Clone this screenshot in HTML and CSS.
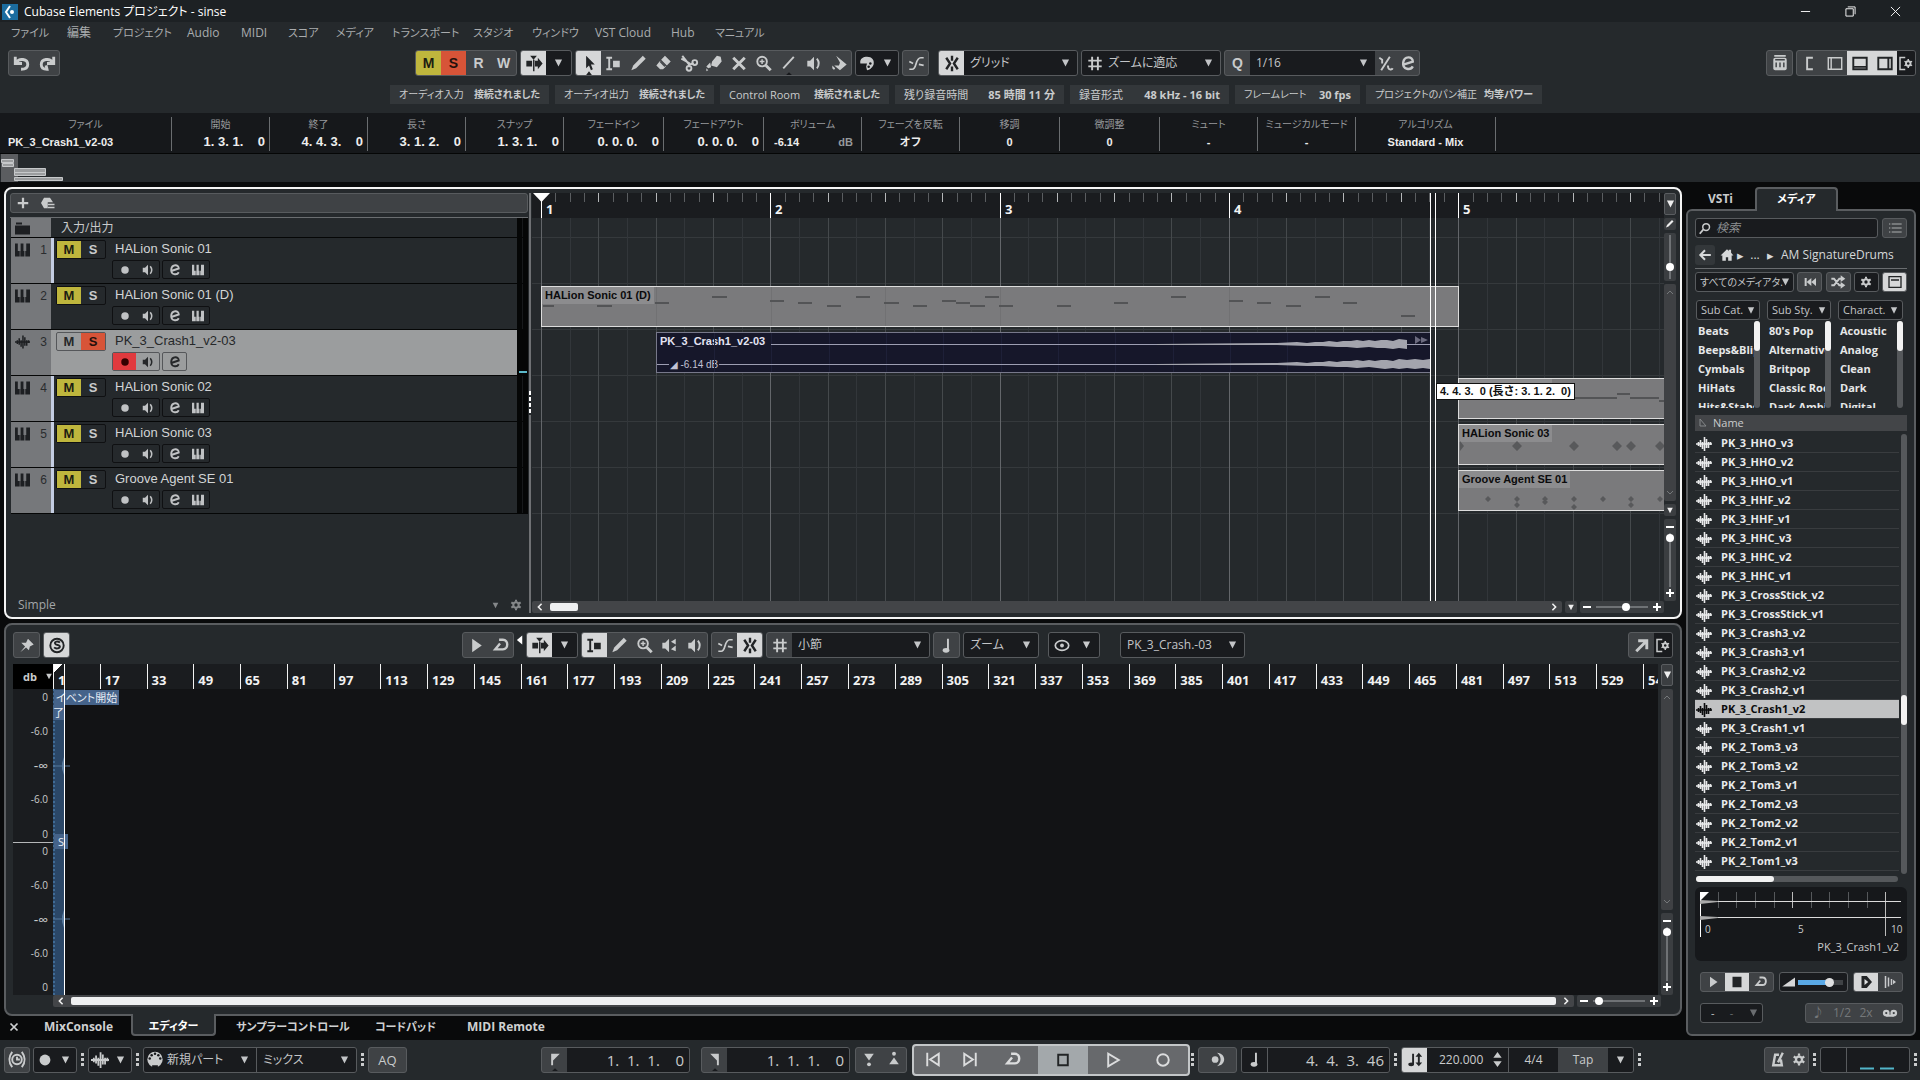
FILE: index.html
```html
<!DOCTYPE html>
<html lang="ja">
<head>
<meta charset="utf-8">
<title>Cubase Elements プロジェクト - sinse</title>
<link rel="stylesheet" href="styles.css">
</head>
<body>
<svg class="defs" aria-hidden="true">
  <symbol id="caret" viewBox="0 0 10 10"><path d="M1 1h8L5 9z"/></symbol>
  <symbol id="undo" viewBox="0 0 24 24"><path d="M5 5v7h7M6 11c3-5 12-4 12 2 0 4-3 5-7 5" fill="none" stroke="currentColor" stroke-width="3"/></symbol>
  <symbol id="redo" viewBox="0 0 24 24"><path d="M19 5v7h-7M18 11C15 6 6 7 6 13c0 4 3 5 6 5l-1-4" fill="none" stroke="currentColor" stroke-width="3"/></symbol>
  <symbol id="follow" viewBox="0 0 24 24"><path d="M4 9h6v6H4zM13 9h3V6l5 6-5 6v-3h-3zM11 8h1.500v12H11zM8 4h7l-3.500 4z"/></symbol>
  <symbol id="arrow" viewBox="0 0 24 24"><path d="M9 4v13l3-3 2 5 2-1-2-5h4zM9 24l3-4 3 4z"/></symbol>
  <symbol id="range" viewBox="0 0 24 24"><path d="M4 5h6v2H8v10h2v2H4v-2h2V7H4zM11 9h7v7h-7z"/></symbol>
  <symbol id="pencil" viewBox="0 0 24 24"><path d="M4 19l2-5L16 4l3 3L9 17z"/></symbol>
  <symbol id="eraser" viewBox="0 0 24 24"><path d="M13 4l6 6-4 4-6-6zM8 9l6 6-3 3H8l-4-4z"/><path d="M8 10l5 5" stroke="#44474a" stroke-width="1.500"/></symbol>
  <symbol id="scissors" viewBox="0 0 24 24"><g fill="none" stroke="currentColor" stroke-width="2"><path d="M5 4l7 9 5-1M12 12l0 4M4 7l9 5"/><circle cx="18" cy="11" r="2.500"/><circle cx="12" cy="17" r="2.500"/></g></symbol>
  <symbol id="glue" viewBox="0 0 24 24"><path d="M10 10l5-6 4 1 1 5-5 6-6-2zM8 11l-4 4 2 2 3-1zM4 17l2 2-2 1z"/></symbol>
  <symbol id="cross" viewBox="0 0 24 24"><path d="M6 6l12 12M18 6L6 18" stroke="currentColor" stroke-width="3"/></symbol>
  <symbol id="zoom" viewBox="0 0 24 24"><circle cx="10" cy="10" r="5" fill="none" stroke="currentColor" stroke-width="2"/><path d="M14 14l5 5" stroke="currentColor" stroke-width="3"/><path d="M7.500 10h5M10 7.500v5" stroke="currentColor" stroke-width="1.500"/></symbol>
  <symbol id="line" viewBox="0 0 24 24"><path d="M6 17L17 5" stroke="currentColor" stroke-width="2"/><path d="M9 24l3-3 3 3z" fill="#17191c"/></symbol>
  <symbol id="speaker" viewBox="0 0 24 24"><path d="M5 9h3l4-4v14l-4-4H5z"/><path d="M15 7q4 5 0 10" fill="none" stroke="currentColor" stroke-width="2"/></symbol>
  <symbol id="speaker2" viewBox="0 0 24 24"><path d="M4 9h3l4-4v14l-4-4H4zM13 8l5-3v6zM13 16l5-4v6z"/></symbol>
  <symbol id="bucket" viewBox="0 0 24 24"><path d="M9 4l11 9-7 6-6-5h5l1-3zM5 14l3 3q-1 3-3 0z"/></symbol>
  <symbol id="head" viewBox="0 0 24 24"><path d="M4 12C3 6 8 4 12 4c6 0 9 4 8 9-1 3-4 7-8 7l-1-4 1-4H8z"/><circle cx="16" cy="12" r="1.500" fill="#17191c"/><circle cx="14" cy="16" r="1.500" fill="#17191c"/></symbol>
  <symbol id="fade" viewBox="0 0 24 24"><path d="M5 18h3C13 18 11 6 17 6h3M5 10l4 2M15 13l5 1" fill="none" stroke="currentColor" stroke-width="1.800"/></symbol>
  <symbol id="snap" viewBox="0 0 24 24"><path d="M6 6l4 6-4 6M18 6l-4 6 4 6M12 4v5M12 15v5" fill="none" stroke="currentColor" stroke-width="2.500"/></symbol>
  <symbol id="hash" viewBox="0 0 24 24"><path d="M9 5v14M15 5v14M5 9h14M5 15h14" stroke="currentColor" stroke-width="2"/></symbol>
  <symbol id="percent" viewBox="0 0 24 24"><path d="M7 19L16 5M5 6l3 2v4M14 14c0 5 4 5 5 3" fill="none" stroke="currentColor" stroke-width="2"/></symbol>
  <symbol id="edit" viewBox="0 0 24 24"><path d="M8 13l9-3C17 4 8 4 7 11c-1 8 8 8 10 4" fill="none" stroke="currentColor" stroke-width="2.500"/></symbol>
  <symbol id="rack" viewBox="0 0 24 24"><rect x="5" y="6" width="14" height="13" rx="2"/><path d="M6 4h12" stroke="currentColor" stroke-width="2"/><path d="M8 11v5M12 11v5M16 11v5M7 8h10" stroke="#3f4245" stroke-width="1.500"/></symbol>
  <symbol id="zleft" viewBox="0 0 24 24"><path d="M15 6H9v12h6" fill="none" stroke="currentColor" stroke-width="2"/></symbol>
  <symbol id="zinfo" viewBox="0 0 24 24"><path d="M5 6h14v12H5zM8 6v12" fill="none" stroke="currentColor" stroke-width="1.500"/></symbol>
  <symbol id="zlow" viewBox="0 0 24 24"><path d="M5 6h14v12H5zM6 15.500h12" fill="none" stroke="currentColor" stroke-width="2"/></symbol>
  <symbol id="zright" viewBox="0 0 24 24"><path d="M5 6h14v12H5zM15.500 6v12" fill="none" stroke="currentColor" stroke-width="2"/></symbol>
  <symbol id="gear" viewBox="0 0 24 24"><circle cx="12" cy="12" r="4" fill="none" stroke="currentColor" stroke-width="3"/><path d="M12 4v3M12 17v3M5 8l3 2M16 14l3 2M5 16l3-2M16 10l3-2" stroke="currentColor" stroke-width="3"/></symbol>
  <symbol id="setup" viewBox="0 0 24 24"><path d="M11 4H4v16h7" fill="none" stroke="currentColor" stroke-width="2"/><circle cx="15" cy="12" r="3" fill="none" stroke="currentColor" stroke-width="2.500"/><path d="M15 6v3M15 15v3M10 9l3 2M17 13l3 2M10 15l3-2M17 11l3-2" stroke="currentColor" stroke-width="2"/></symbol>
  <symbol id="plus" viewBox="0 0 12 12"><path d="M6 2v8M2 6h8" stroke="currentColor" stroke-width="2"/></symbol>
  <symbol id="minus" viewBox="0 0 12 12"><path d="M2 6h8" stroke="currentColor" stroke-width="2"/></symbol>
  <symbol id="addtrack" viewBox="0 0 24 24"><path d="M12 5v14M5 12h14" stroke="currentColor" stroke-width="3"/></symbol>
  <symbol id="preset" viewBox="0 0 24 24"><path d="M4 12l4-7h8l4 6h-7v8H8z"/><path d="M13 14h9M13 18h9" stroke="currentColor" stroke-width="2"/></symbol>
  <symbol id="folder" viewBox="0 0 15 13"><path d="M1 0h6v2H1zM0 3h15v9H0z"/></symbol>
  <symbol id="keys" viewBox="0 0 16 14"><path d="M0 0h3v8h2v6H0zM6 0h3v8h1v6H5.700V8H6zM12 0h4v14h-5V8h1z"/></symbol>
  <symbol id="wave" viewBox="0 0 16 14"><path d="M0 7h16M2.500 5v4M4.500 3v7M6.500 5v7M8.500 0v14M10.500 2v9M12.500 5v6M14.500 5v3" fill="none" stroke="currentColor" stroke-width="1.600"/></symbol>
  <symbol id="dot" viewBox="0 0 24 24"><circle cx="12" cy="12" r="5"/></symbol>
  <symbol id="play" viewBox="0 0 24 24"><path d="M8 5l10 7-10 7z"/></symbol>
  <symbol id="loop" viewBox="0 0 24 24"><path d="M10 6h4c6 0 6 10 0 10H6l5-6" fill="none" stroke="currentColor" stroke-width="2.500"/></symbol>
  <symbol id="pin" viewBox="0 0 24 24"><path d="M13 5l6 6-2 1-2 1-1 4-3-3-6 5 5-6-4-4 5 0 1-2z"/></symbol>
  <symbol id="note" viewBox="0 0 24 24"><ellipse cx="11" cy="17" rx="3.500" ry="2.500"/><path d="M13 17V5" stroke="currentColor" stroke-width="2"/></symbol>
  <symbol id="eye" viewBox="0 0 24 24"><ellipse cx="12" cy="12" rx="7" ry="5" fill="none" stroke="currentColor" stroke-width="1.800"/><circle cx="12" cy="12" r="2"/></symbol>
  <symbol id="open" viewBox="0 0 24 24"><path d="M6 18L17 7M8 7h9v9" fill="none" stroke="currentColor" stroke-width="3"/></symbol>
  <symbol id="solo" viewBox="0 0 24 24"><circle cx="12" cy="12" r="7" fill="none" stroke="currentColor" stroke-width="2"/><path d="M15 9c-2-2-6-1-5 1s5 1 5 3-4 3-6 1" fill="none" stroke="currentColor" stroke-width="2"/></symbol>
  <symbol id="list" viewBox="0 0 24 24"><path d="M3 6h2M7 6h15M3 12h2M7 12h15M3 18h2M7 18h15" stroke="currentColor" stroke-width="3"/></symbol>
  <symbol id="back" viewBox="0 0 24 24"><path d="M22 12H5M12 4l-8 8 8 8" fill="none" stroke="currentColor" stroke-width="3.500"/></symbol>
  <symbol id="home" viewBox="0 0 24 24"><path d="M12 2L1 13h3v9h6v-6h4v6h6v-9h3L19 8V3h-4v2z"/></symbol>
  <symbol id="prev" viewBox="0 0 24 24"><path d="M4 6h3v12H4zM14 6v12l-7-6zM21 6v12l-7-6z"/></symbol>
  <symbol id="shuffle" viewBox="0 0 24 24"><path d="M2 7h4l8 10h4M2 17h4l8-10h4" fill="none" stroke="currentColor" stroke-width="3"/><path d="M16 2l7 5-7 5zM16 12l7 5-7 5z"/></symbol>
  <symbol id="window" viewBox="0 0 24 24"><path d="M3 4h18v16H3zM6 9h12" fill="none" stroke="currentColor" stroke-width="2"/></symbol>
  <symbol id="search" viewBox="0 0 16 16"><circle cx="9.500" cy="6" r="4.500" fill="none" stroke="currentColor" stroke-width="2"/><path d="M6 9l-5 6" stroke="currentColor" stroke-width="2.500"/></symbol>
  <symbol id="stopf" viewBox="0 0 24 24"><path d="M6 5h12v14H6z"/></symbol>
  <symbol id="ramp" viewBox="0 0 24 24"><path d="M3 18L20 6v12z"/></symbol>
  <symbol id="autop" viewBox="0 0 24 24"><path d="M6 4h7l7 8-7 8H6z"/><path d="M10 8l5 4-5 4z" fill="#dedfe0"/></symbol>
  <symbol id="sync" viewBox="0 0 24 24"><path d="M6 4v16M10 6v12M14 8v8" stroke="currentColor" stroke-width="2"/><path d="M16 9l4 3-4 3z"/></symbol>
  <symbol id="tape" viewBox="0 0 24 24"><g fill="none" stroke="currentColor" stroke-width="3"><circle cx="7" cy="12" r="3"/><circle cx="17" cy="12" r="3"/><path d="M7 15.500h10"/></g></symbol>
  <symbol id="clock" viewBox="0 0 24 24"><g fill="none" stroke="currentColor" stroke-width="2"><circle cx="12" cy="12" r="5"/><path d="M12 9v3h3M7 4q-6 8 0 16M17 4q6 8 0 16"/></g></symbol>
  <symbol id="din" viewBox="0 0 24 24"><circle cx="12" cy="12" r="8"/><g fill="#17191c"><circle cx="6.500" cy="11" r="1.300"/><circle cx="8.500" cy="7.500" r="1.300"/><circle cx="12" cy="6" r="1.300"/><circle cx="15.500" cy="7.500" r="1.300"/><circle cx="17.500" cy="11" r="1.300"/><path d="M9 21v-3h6v3z"/></g></symbol>
  <symbol id="flagl" viewBox="0 0 24 24"><path d="M8 6h9l-7 7v5H8z"/><path d="M8 25l4-4 4 4z" fill="#191b1e"/></symbol>
  <symbol id="flagr" viewBox="0 0 24 24"><path d="M16 6H7l7 7v5h2z"/><path d="M8 25l4-4 4 4z" fill="#191b1e"/></symbol>
  <symbol id="pin1" viewBox="0 0 24 24"><path d="M7 6h10l-5 7z"/><circle cx="12" cy="17" r="2"/></symbol>
  <symbol id="pin2" viewBox="0 0 24 24"><path d="M7 17h10l-5-7z"/><circle cx="12" cy="6" r="2"/></symbol>
  <symbol id="tostart" viewBox="0 0 24 24"><path d="M6 5v14M18 6v12l-9-6z" fill="none" stroke="currentColor" stroke-width="2"/></symbol>
  <symbol id="toend" viewBox="0 0 24 24"><path d="M18 5v14M6 6v12l9-6z" fill="none" stroke="currentColor" stroke-width="2"/></symbol>
  <symbol id="stop" viewBox="0 0 24 24"><path d="M7 7h10v11H7z" fill="none" stroke="currentColor" stroke-width="2"/></symbol>
  <symbol id="playo" viewBox="0 0 24 24"><path d="M7 6v13l11-6.500z" fill="none" stroke="currentColor" stroke-width="2"/></symbol>
  <symbol id="rec" viewBox="0 0 24 24"><circle cx="12" cy="12.500" r="6" fill="none" stroke="currentColor" stroke-width="2"/></symbol>
  <symbol id="perf" viewBox="0 0 24 24"><circle cx="9" cy="12" r="3.500"/><path d="M11 5c10 1 10 13 0 14 5-4 5-10 0-14z"/></symbol>
  <symbol id="tempo" viewBox="0 0 24 24"><ellipse cx="8" cy="17" rx="3" ry="2"/><path d="M10 17V6M16 8v9" stroke="currentColor" stroke-width="2"/><path d="M12.500 9l3.500-4 3.500 4zM12.500 15l3.500 4 3.500-4z"/></symbol>
  <symbol id="metro" viewBox="0 0 24 24"><path d="M13 7H9L7 18h9l-1-6M12 15l5-10" fill="none" stroke="currentColor" stroke-width="2.500"/></symbol>
  <symbol id="chev" viewBox="0 0 10 10"><path d="M2 7l3-3 3 3" fill="none" stroke="currentColor"/></symbol>
  <symbol id="cleft" viewBox="0 0 10 10"><path d="M7 1L3 5l4 4" fill="none" stroke="currentColor" stroke-width="2"/></symbol>
  <symbol id="cright" viewBox="0 0 10 10"><path d="M3 1l4 4-4 4" fill="none" stroke="currentColor" stroke-width="2"/></symbol>
</svg>

<header class="head">
  <div class="titlebar">
    <svg class="logo" viewBox="0 0 16 16"><path d="M0 0h16v16H0z" fill="#1b6c9f"/><path d="M8 2L4 8l4 6" fill="none" stroke="#fff" stroke-width="2"/><circle cx="10" cy="8" r="2" fill="#fff"/></svg>
    <h1>Cubase Elements プロジェクト - sinse</h1>
    <div class="winbtns">
      <button aria-label="最小化"><svg viewBox="0 0 12 12"><path d="M1 6h10"/></svg></button>
      <button aria-label="元に戻す"><svg viewBox="0 0 12 12"><path d="M1 3h8v8H1zM3 1h8v8"/></svg></button>
      <button aria-label="閉じる"><svg viewBox="0 0 12 12"><path d="M1 1l10 10M11 1L1 11"/></svg></button>
    </div>
  </div>
  <nav class="menu">
    <a href="#" class="kana">ファイル</a><a href="#">編集</a><a href="#" class="kana">プロジェクト</a><a href="#">Audio</a><a href="#">MIDI</a><a href="#" class="kana">スコア</a><a href="#" class="kana">メディア</a><a href="#" class="kana">トランスポート</a><a href="#" class="kana">スタジオ</a><a href="#" class="kana">ウィンドウ</a><a href="#">VST Cloud</a><a href="#">Hub</a><a href="#" class="kana">マニュアル</a>
  </nav>
  <div class="toolbar">
    <div class="cluster">
      <div class="grp"><button aria-label="取り消し"><svg><use href="#undo"/></svg></button><button aria-label="やり直し"><svg><use href="#redo"/></svg></button></div>
    </div>
    <div class="cluster">
      <div class="grp letters"><button class="yellow">M</button><button class="red">S</button><button>R</button><button>W</button></div>
      <div class="grp"><button class="on" aria-label="オートスクロール"><svg><use href="#follow"/></svg></button><button class="dark" aria-label="設定"><svg class="caret"><use href="#caret"/></svg></button></div>
      <div class="grp tools">
        <button class="on" aria-label="選択"><svg><use href="#arrow"/></svg></button><button aria-label="範囲"><svg><use href="#range"/></svg></button><button aria-label="鉛筆"><svg><use href="#pencil"/></svg></button><button aria-label="消しゴム"><svg><use href="#eraser"/></svg></button><button aria-label="はさみ"><svg><use href="#scissors"/></svg></button><button aria-label="のり"><svg><use href="#glue"/></svg></button><button aria-label="ミュート"><svg><use href="#cross"/></svg></button><button aria-label="ズーム"><svg><use href="#zoom"/></svg></button><button aria-label="ライン"><svg><use href="#line"/></svg></button><button aria-label="再生"><svg><use href="#speaker"/></svg></button><button aria-label="カラー"><svg><use href="#bucket"/></svg></button>
      </div>
      <div class="grp slim"><button class="dark" aria-label="カラーメニュー"><svg><use href="#head"/></svg></button><button class="dark" aria-label="カラー選択"><svg class="caret"><use href="#caret"/></svg></button></div>
      <div class="grp"><button aria-label="クロスフェード"><svg><use href="#fade"/></svg></button></div>
      <div class="grp apart"><button class="on" aria-label="スナップ"><svg><use href="#snap"/></svg></button><label class="sel w113"><select aria-label="スナップタイプ"><option>グリッド</option></select><svg class="caret"><use href="#caret"/></svg></label></div>
      <div class="grp"><button class="dark" aria-label="グリッド"><svg><use href="#hash"/></svg></button><label class="sel w113 tight"><select aria-label="グリッドタイプ"><option>ズームに適応</option></select><svg class="caret"><use href="#caret"/></svg></label></div>
      <div class="grp"><button class="q">Q</button><label class="sel w125"><select aria-label="クオンタイズ"><option>1/16</option></select><svg class="caret"><use href="#caret"/></svg></label><button class="b22" aria-label="適用"><svg><use href="#percent"/></svg></button><button class="b22" aria-label="パネル"><svg><use href="#edit"/></svg></button></div>
    </div>
    <div class="cluster zones">
      <div class="grp"><button aria-label="ラック"><svg><use href="#rack"/></svg></button></div>
      <div class="grp"><button aria-label="左ゾーン"><svg><use href="#zleft"/></svg></button><button aria-label="情報"><svg><use href="#zinfo"/></svg></button><button class="on" aria-label="下ゾーン"><svg><use href="#zlow"/></svg></button><button class="on" aria-label="右ゾーン"><svg><use href="#zright"/></svg></button><button class="dark b18" aria-label="ツールバー設定"><svg><use href="#setup"/></svg></button></div>
    </div>
  </div>
  <dl class="status">
    <div class="s160 kana"><dt>オーディオ入力</dt><dd>接続されました</dd></div>
    <div class="s160 kana"><dt>オーディオ出力</dt><dd>接続されました</dd></div>
    <div class="s168"><dt>Control Room</dt><dd class="kana">接続されました</dd></div>
    <div class="s168"><dt>残り録音時間</dt><dd>85 時間 11 分</dd></div>
    <div class="s160"><dt>録音形式</dt><dd>48 kHz - 16 bit</dd></div>
    <div class="s125"><dt class="kana">フレームレート</dt><dd>30 fps</dd></div>
    <div class="s176 kana"><dt>プロジェクトのパン補正</dt><dd>均等パワー</dd></div>
  </dl>
</header>

<dl class="info">
  <div class="left"><dt>ファイル</dt><dd>PK_3_Crash1_v2-03</dd></div>
  <div class="num"><dt>開始</dt><dd>1. 3. 1.    0</dd></div>
  <div class="num"><dt>終了</dt><dd>4. 4. 3.    0</dd></div>
  <div class="num"><dt>長さ</dt><dd>3. 1. 2.    0</dd></div>
  <div class="num"><dt>スナップ</dt><dd>1. 3. 1.    0</dd></div>
  <div class="num"><dt>フェードイン</dt><dd>0. 0. 0.    0</dd></div>
  <div class="num"><dt>フェードアウト</dt><dd>0. 0. 0.    0</dd></div>
  <div class="vol"><dt>ボリューム</dt><dd>-6.14 <span>dB</span></dd></div>
  <div><dt>フェーズを反転</dt><dd>オフ</dd></div>
  <div><dt>移調</dt><dd>0</dd></div>
  <div><dt>微調整</dt><dd>0</dd></div>
  <div><dt>ミュート</dt><dd>-</dd></div>
  <div><dt>ミュージカルモード</dt><dd>-</dd></div>
  <div><dt>アルゴリズム</dt><dd>Standard - Mix</dd></div>
</dl>
<div class="overview">
  <svg width="70" height="28"><path d="M1 0h17v28H1z" fill="#5b5d60"/><g fill="#9b9d9f" stroke="#c6c8ca"><path d="M1.500 5.500h12v3h-12zM2.500 9.500h11v3h-11zM14.500 14.500h31v4h-31zM14.500 18.500h31v3h-31zM14.500 23.500h48v3h-48z"/></g></svg>
</div>

<main class="main">
  <div class="leftcol">
    <section class="panel project">
      <div class="tracks">
        <div class="trackbar"><div class="grp low"><button aria-label="トラックを追加"><svg><use href="#addtrack"/></svg></button><button aria-label="プリセット"><svg><use href="#preset"/></svg></button></div></div>
        <div class="tracklist">
          <div class="track io"><div class="tid"><svg class="kind"><use href="#folder"/></svg></div><div class="tbody"><span>入力/出力</span></div><i class="meter"></i></div>
          <div class="track strip"><div class="tid"><svg class="kind"><use href="#keys"/></svg><b>1</b></div><div class="tbody"><div class="ms"><button class="yellow">M</button><button>S</button></div><h2>HALion Sonic 01</h2><div class="tbtns"><div><button aria-label="録音可能"><svg><use href="#dot"/></svg></button><button aria-label="モニター"><svg><use href="#speaker"/></svg></button></div><div><button aria-label="編集"><svg><use href="#edit"/></svg></button><button aria-label="音源"><svg class="kind"><use href="#keys"/></svg></button></div></div></div><i class="meter"></i></div>
          <div class="track"><div class="tid"><svg class="kind"><use href="#keys"/></svg><b>2</b></div><div class="tbody"><div class="ms"><button class="yellow">M</button><button>S</button></div><h2>HALion Sonic 01 (D)</h2><div class="tbtns"><div><button aria-label="録音可能"><svg><use href="#dot"/></svg></button><button aria-label="モニター"><svg><use href="#speaker"/></svg></button></div><div><button aria-label="編集"><svg><use href="#edit"/></svg></button><button aria-label="音源"><svg class="kind"><use href="#keys"/></svg></button></div></div></div><i class="meter"></i></div>
          <div class="track picked"><div class="tid"><svg class="kind"><use href="#wave"/></svg><b>3</b></div><div class="tbody"><div class="ms"><button>M</button><button class="red">S</button></div><h2>PK_3_Crash1_v2-03</h2><div class="tbtns"><div><button class="armed" aria-label="録音可能"><svg><use href="#dot"/></svg></button><button aria-label="モニター"><svg><use href="#speaker"/></svg></button></div><div><button aria-label="編集"><svg><use href="#edit"/></svg></button></div></div></div><i class="meter live"></i></div>
          <div class="track strip"><div class="tid"><svg class="kind"><use href="#keys"/></svg><b>4</b></div><div class="tbody"><div class="ms"><button class="yellow">M</button><button>S</button></div><h2>HALion Sonic 02</h2><div class="tbtns"><div><button aria-label="録音可能"><svg><use href="#dot"/></svg></button><button aria-label="モニター"><svg><use href="#speaker"/></svg></button></div><div><button aria-label="編集"><svg><use href="#edit"/></svg></button><button aria-label="音源"><svg class="kind"><use href="#keys"/></svg></button></div></div></div><i class="meter"></i></div>
          <div class="track strip"><div class="tid"><svg class="kind"><use href="#keys"/></svg><b>5</b></div><div class="tbody"><div class="ms"><button class="yellow">M</button><button>S</button></div><h2>HALion Sonic 03</h2><div class="tbtns"><div><button aria-label="録音可能"><svg><use href="#dot"/></svg></button><button aria-label="モニター"><svg><use href="#speaker"/></svg></button></div><div><button aria-label="編集"><svg><use href="#edit"/></svg></button><button aria-label="音源"><svg class="kind"><use href="#keys"/></svg></button></div></div></div><i class="meter"></i></div>
          <div class="track strip"><div class="tid"><svg class="kind"><use href="#keys"/></svg><b>6</b></div><div class="tbody"><div class="ms"><button class="yellow">M</button><button>S</button></div><h2>Groove Agent SE 01</h2><div class="tbtns"><div><button aria-label="録音可能"><svg><use href="#dot"/></svg></button><button aria-label="モニター"><svg><use href="#speaker"/></svg></button></div><div><button aria-label="編集"><svg><use href="#edit"/></svg></button><button aria-label="音源"><svg class="kind"><use href="#keys"/></svg></button></div></div></div><i class="meter"></i></div>
        </div>
        <div class="trackfoot"><span>Simple</span><svg class="caret"><use href="#caret"/></svg><svg class="gear"><use href="#gear"/></svg></div>
      </div>
      <div class="divider"><i></i></div>
      <div class="arrange">
        <div class="canvas">
          <svg class="grid" aria-hidden="true">
            <path d="M0 0h2400v25H0z" fill="#1a1c1f"/>
            <path class="g0" d="M0 44.500h2400M0 90.500h2400M0 136.500h2400M0 182.500h2400M0 228.500h2400M0 274.500h2400M0 320.500h2400"/>
            <path class="g1" d="M38.500 25v900M95.500 25v900M152.500 25v900M210.500 25v900M267.500 25v900M324.500 25v900M382.500 25v900M439.500 25v900M496.500 25v900M553.500 25v900M611.500 25v900M668.500 25v900M725.500 25v900M783.500 25v900M840.500 25v900M897.500 25v900M955.500 25v900M1012.500 25v900M1070.500 25v900M1127.500 25v900"/>
            <path class="g2" d="M66.500 25v900M124.500 25v900M181.500 25v900M296.500 25v900M353.500 25v900M410.500 25v900M525.500 25v900M582.500 25v900M639.500 25v900M754.500 25v900M811.500 25v900M869.500 25v900M984.500 25v900M1041.500 25v900M1098.500 25v900"/>
            <path class="g3" d="M9.500 25v900M238.500 25v900M468.500 25v900M697.500 25v900M926.500 25v900"/>
            <path class="t1" d="M23.500 0v9M38.500 0v9M52.500 0v9M81.500 0v9M95.500 0v9M109.500 0v9M138.500 0v9M152.500 0v9M167.500 0v9M195.500 0v9M210.500 0v9M224.500 0v9M253.500 0v9M267.500 0v9M281.500 0v9M310.500 0v9M324.500 0v9M339.500 0v9M367.500 0v9M382.500 0v9M396.500 0v9M425.500 0v9M439.500 0v9M453.500 0v9M482.500 0v9M496.500 0v9M510.500 0v9M539.500 0v9M553.500 0v9M568.500 0v9M597.500 0v9M611.500 0v9M625.500 0v9M654.500 0v9M668.500 0v9M683.500 0v9M711.500 0v9M725.500 0v9M740.500 0v9M768.500 0v9M783.500 0v9M797.500 0v9M826.500 0v9M840.500 0v9M854.500 0v9M883.500 0v9M897.500 0v9M912.500 0v9M941.500 0v9M955.500 0v9M969.500 0v9M998.500 0v9M1012.500 0v9M1026.500 0v9M1055.500 0v9M1070.500 0v9M1084.500 0v9M1112.500 0v9M1127.500 0v9"/>
            <path class="t2" d="M66.500 0v9M124.500 0v9M181.500 0v9M296.500 0v9M353.500 0v9M410.500 0v9M525.500 0v9M582.500 0v9M639.500 0v9M754.500 0v9M811.500 0v9M869.500 0v9M984.500 0v9M1041.500 0v9M1098.500 0v9"/>
            <path class="t3" d="M9.500 0v25M238.500 0v25M468.500 0v25M697.500 0v25M926.500 0v25"/>
            <path d="M1 0h17l-8.500 9z" fill="#fff"/>
          </svg>
          <b class="bar" style="left:14px">1</b><b class="bar" style="left:243px">2</b><b class="bar" style="left:473px">3</b><b class="bar" style="left:702px">4</b><b class="bar" style="left:931px">5</b>
          <div class="clip" style="left:9px;top:93px;width:918px"><span>HALion Sonic 01 (D)</span>
            <svg><path class="hair" d="M229.500 0v39M458.500 0v39M687.500 0v39M114.500 0v39M343.500 0v39"/><path class="notes" d="M1 19h11M55 19h15M113 16h14M170 10h15M228 14h14M256 16h14M285 19h14M314 10h14M342 16h15M371 19h14M400 14h14M414 16h14M428 19h15M443 10h14M457 19h14M515 19h14M572 16h14M629 10h15M687 14h14M715 16h14M744 19h15M773 10h15M801 16h14M859 29h14"/></svg></div>
          <div class="clip audio" style="left:124px;top:139px;width:775px"><span>PK_3_Crash1_v2-03</span><small>◢ -6.14 dB</small>
            <svg><path class="hair" d="M57.500 0v39M114.500 0v39M172.500 0v39M229.500 0v39M286.500 0v39M344.500 0v39M401.500 0v39M458.500 0v39M516.500 0v39M573.500 0v39M630.500 0v39"/><path class="zero" d="M114 11.500h660M0 31.500h12M62 31.500h712"/><path class="body" d="M500 11L620 10 640 9 650 10 658 9 666 9 672 8 680 9 686 8 694 8 700 7 706 8 712 7 718 8 724 7 730 7 736 8 742 6 750 7 750 16 742 15 736 16 728 15 720 15 712 14 700 15 690 14 680 14 665 13 650 13 620 12 500 12zM500 31L620 30 640 29 650 30 658 29 666 29 672 28 680 29 686 28 694 28 700 27 706 28 712 27 718 28 724 27 730 27 736 28 742 26 750 27 758 26 766 27 773 26 773 36 766 35 758 36 750 35 742 36 736 35 728 36 720 35 712 34 700 35 690 34 680 34 665 33 650 33 620 32 500 32z"/><path d="M758 3v8l6-4zM764 4v6l7-3z" fill="#6b6a7e"/></svg></div>
          <div class="clip" style="left:926px;top:185px;width:240px"><span>HALion Sonic 02</span><svg><path class="notes" d="M57 19h101M158 15h13M171 19h29M200 22h20"/></svg></div>
          <div class="clip" style="left:926px;top:231px;width:240px"><span>HALion Sonic 03</span><svg><path class="dia" d="M1 16l4 5-4 5zM53 21l5-5 5 5-5 5zM110 21l5-5 5 5-5 5zM153 21l5-5 5 5-5 5zM167 21l5-5 5 5-5 5zM196 21l5-5 5 5-5 5z"/></svg></div>
          <div class="clip" style="left:926px;top:277px;width:240px"><span>Groove Agent SE 01</span><svg><path class="dia" d="M26 28l3-3 3 3-3 3zM55 28l3-3 3 3-3 3zM55 34l3-3 3 3-3 3zM83 28l3-3 3 3-3 3zM83 31l3-3 3 3-3 3zM112 28l3-3 3 3-3 3zM112 36l3-3 3 3-3 3zM141 28l3-3 3 3-3 3zM169 28l3-3 3 3-3 3zM169 34l3-3 3 3-3 3zM198 28l3-3 3 3-3 3z"/></svg></div>
          <i class="cursor" style="left:898px"></i><i class="cursor" style="left:903px"></i>
          <div class="tip">4. 4. 3.  0 (長さ: 3. 1. 2.  0)</div>
        </div>
        <div class="vbars">
          <button class="chip tall" aria-label="ルーラー"><svg class="caret"><use href="#caret"/></svg></button>
          <button class="chip" aria-label="ペン"><svg class="mini"><use href="#pencil"/></svg></button>
          <div class="vz short"><input type="range" class="vert" aria-label="波形ズーム" value="22"></div>
          <div class="vscroll"><svg><use href="#chev"/></svg><svg class="flip"><use href="#chev"/></svg></div>
          <button class="chip" aria-label="縦メニュー"><svg class="caret sm"><use href="#caret"/></svg></button>
          <div class="vz"><button aria-label="縮小"><svg><use href="#minus"/></svg></button><input type="range" class="vert" aria-label="縦ズーム" value="97"><button aria-label="拡大"><svg><use href="#plus"/></svg></button></div>
        </div>
        <div class="hbars">
          <div class="hscroll"><svg><use href="#cleft"/></svg><div><i style="width:28px"></i></div><svg><use href="#cright"/></svg></div>
          <button class="chip" aria-label="横メニュー"><svg class="caret sm"><use href="#caret"/></svg></button>
          <div class="hz"><button aria-label="縮小"><svg><use href="#minus"/></svg></button><input type="range" aria-label="横ズーム" value="60"><button aria-label="拡大"><svg><use href="#plus"/></svg></button></div>
        </div>
      </div>
    </section>

    <section class="panel editor">
      <div class="edbar">
        <div class="cluster">
          <div class="grp"><button aria-label="固定"><svg><use href="#pin"/></svg></button></div>
          <div class="grp"><button class="on" aria-label="ソロ"><svg><use href="#solo"/></svg></button></div>
        </div>
        <div class="cluster">
          <div class="grp"><button aria-label="試聴"><svg><use href="#play"/></svg></button><button aria-label="試聴ループ"><svg><use href="#loop"/></svg></button></div>
          <svg class="pointer" viewBox="0 0 9 10"><path d="M1 5l6-5v10z"/></svg>
          <div class="grp"><button class="on" aria-label="オートスクロール"><svg><use href="#follow"/></svg></button><button class="dark" aria-label="設定"><svg class="caret"><use href="#caret"/></svg></button></div>
          <div class="grp"><button class="on" aria-label="範囲"><svg><use href="#range"/></svg></button><button aria-label="鉛筆"><svg><use href="#pencil"/></svg></button><button aria-label="ズーム"><svg><use href="#zoom"/></svg></button><button aria-label="スクラブ"><svg><use href="#speaker2"/></svg></button><button aria-label="再生"><svg><use href="#speaker"/></svg></button></div>
          <div class="grp"><button aria-label="ゼロクロス"><svg><use href="#fade"/></svg></button><button class="on" aria-label="スナップ"><svg><use href="#snap"/></svg></button></div>
          <div class="grp"><button aria-label="グリッド"><svg><use href="#hash"/></svg></button><label class="sel w137"><select aria-label="グリッドタイプ"><option>小節</option></select><svg class="caret"><use href="#caret"/></svg></label></div>
          <div class="grp"><button aria-label="音符"><svg><use href="#note"/></svg></button></div>
          <label class="grp sel w75"><select aria-label="表示"><option>ズーム</option></select><svg class="caret"><use href="#caret"/></svg></label>
          <div class="grp apart"><button class="dark" aria-label="表示項目"><svg><use href="#eye"/></svg></button><button class="dark" aria-label="表示メニュー"><svg class="caret"><use href="#caret"/></svg></button></div>
          <label class="grp sel w125 far"><select aria-label="イベント"><option>PK_3_Crash.-03</option></select><svg class="caret"><use href="#caret"/></svg></label>
        </div>
        <div class="grp"><button aria-label="ウィンドウで開く"><svg><use href="#open"/></svg></button><button class="dark b18" aria-label="設定"><svg><use href="#setup"/></svg></button></div>
      </div>
      <div class="sample">
        <button class="db">db <svg class="caret sm"><use href="#caret"/></svg></button>
        <div class="ruler"><b>1</b><b>17</b><b>33</b><b>49</b><b>65</b><b>81</b><b>97</b><b>113</b><b>129</b><b>145</b><b>161</b><b>177</b><b>193</b><b>209</b><b>225</b><b>241</b><b>257</b><b>273</b><b>289</b><b>305</b><b>321</b><b>337</b><b>353</b><b>369</b><b>385</b><b>401</b><b>417</b><b>433</b><b>449</b><b>465</b><b>481</b><b>497</b><b>513</b><b>529</b><b>545</b></div>
        <button class="chip tall" aria-label="ルーラー"><svg class="caret"><use href="#caret"/></svg></button>
        <div class="scale">
          <div><span>0</span><span>-6.0</span><span class="inf">-∞</span><span>-6.0</span><span>0</span></div>
          <div><span>0</span><span>-6.0</span><span class="inf">-∞</span><span>-6.0</span><span>0</span></div>
        </div>
        <div class="wavearea">
          <div class="event"></div>
          <svg class="blip top" viewBox="0 0 20 20"><path d="M0 9.500h17v1H0zM9 7l2-6 1-1v20l-1-1-2-6z"/></svg>
          <svg class="blip low" viewBox="0 0 20 20"><path d="M0 9.500h17v1H0zM9 7l2-6 1-1v20l-1-1-2-6z"/></svg>
          <span class="tag start">イベント開始</span><span class="tag end">了</span><span class="tag snap">S</span>
          <i class="edge"></i>
        </div>
        <div class="vbars">
          <div class="vscroll"><svg><use href="#chev"/></svg><svg class="flip"><use href="#chev"/></svg></div>
          <div class="vz"><button aria-label="縮小"><svg><use href="#minus"/></svg></button><input type="range" class="vert" aria-label="縦ズーム" value="97"><button aria-label="拡大"><svg><use href="#plus"/></svg></button></div>
        </div>
        <div class="hbars">
          <div class="hscroll"><svg><use href="#cleft"/></svg><div><i style="width:100%"></i></div><svg><use href="#cright"/></svg></div>
          <div class="hz"><button aria-label="縮小"><svg><use href="#minus"/></svg></button><input type="range" aria-label="横ズーム" value="5"><button aria-label="拡大"><svg><use href="#plus"/></svg></button></div>
        </div>
      </div>
    </section>
    <nav class="lowtabs">
      <button class="x" aria-label="閉じる"><svg><use href="#cross"/></svg></button>
      <a href="#" class="n1">MixConsole</a><a href="#" class="cur kana">エディター</a><a href="#" class="n2 kana">サンプラーコントロール</a><a href="#" class="n3 kana">コードパッド</a><a href="#">MIDI Remote</a>
    </nav>
  </div>

  <aside class="side">
    <nav class="sidetabs"><a href="#">VSTi</a><a href="#" class="cur">メディア</a></nav>
    <div class="media">
      <div class="row searchrow"><label class="search"><svg><use href="#search"/></svg><input type="text" placeholder="検索" aria-label="検索"></label><button class="sb dim" aria-label="リスト"><svg><use href="#list"/></svg></button></div>
      <div class="row crumbs"><button aria-label="戻る"><svg><use href="#back"/></svg></button><a href="#" aria-label="ホーム"><svg><use href="#home"/></svg></a><i>▸</i><a href="#" class="dots3">...</a><i>▸</i><a href="#" class="here">AM SignatureDrums</a></div>
      <div class="row filters"><label class="sel w100"><select aria-label="メディアタイプ"><option>すべてのメディアタ.</option></select><svg class="caret"><use href="#caret"/></svg></label><button class="sb" aria-label="リセット"><svg><use href="#prev"/></svg></button><button class="sb" aria-label="シャッフル"><svg><use href="#shuffle"/></svg></button><button class="sb dark" aria-label="設定"><svg><use href="#gear"/></svg></button><button class="sb on" aria-label="プレビュー"><svg><use href="#window"/></svg></button></div>
      <div class="cats">
        <div><label class="sel"><select aria-label="Sub Category"><option>Sub Cat.</option></select><svg class="caret"><use href="#caret"/></svg></label><div class="cat"><ul><li>Beats</li><li>Beeps&amp;Blips</li><li>Cymbals</li><li>HiHats</li><li>Hits&amp;Stabs</li></ul><div class="sc"><i></i></div></div></div>
        <div><label class="sel"><select aria-label="Sub Style"><option>Sub Sty.</option></select><svg class="caret"><use href="#caret"/></svg></label><div class="cat"><ul><li>80's Pop</li><li>Alternative</li><li>Britpop</li><li>Classic Rock</li><li>Dark Ambient</li></ul><div class="sc"><i></i></div></div></div>
        <div><label class="sel"><select aria-label="Character"><option>Charact.</option></select><svg class="caret"><use href="#caret"/></svg></label><div class="cat"><ul><li>Acoustic</li><li>Analog</li><li>Clean</li><li>Dark</li><li>Digital</li></ul><div class="sc"><i></i></div></div></div>
      </div>
      <div class="results">
        <div class="rwrap">
        <table>
          <thead><tr><th><svg viewBox="0 0 8 8"><path d="M1 0v7h6z" fill="none" stroke="currentColor"/></svg>Name</th></tr></thead>
          <tbody>
            <tr><td><svg><use href="#wave"/></svg>PK_3_HHO_v3</td></tr>
            <tr><td><svg><use href="#wave"/></svg>PK_3_HHO_v2</td></tr>
            <tr><td><svg><use href="#wave"/></svg>PK_3_HHO_v1</td></tr>
            <tr><td><svg><use href="#wave"/></svg>PK_3_HHF_v2</td></tr>
            <tr><td><svg><use href="#wave"/></svg>PK_3_HHF_v1</td></tr>
            <tr><td><svg><use href="#wave"/></svg>PK_3_HHC_v3</td></tr>
            <tr><td><svg><use href="#wave"/></svg>PK_3_HHC_v2</td></tr>
            <tr><td><svg><use href="#wave"/></svg>PK_3_HHC_v1</td></tr>
            <tr><td><svg><use href="#wave"/></svg>PK_3_CrossStick_v2</td></tr>
            <tr><td><svg><use href="#wave"/></svg>PK_3_CrossStick_v1</td></tr>
            <tr><td><svg><use href="#wave"/></svg>PK_3_Crash3_v2</td></tr>
            <tr><td><svg><use href="#wave"/></svg>PK_3_Crash3_v1</td></tr>
            <tr><td><svg><use href="#wave"/></svg>PK_3_Crash2_v2</td></tr>
            <tr><td><svg><use href="#wave"/></svg>PK_3_Crash2_v1</td></tr>
            <tr class="picked"><td><svg><use href="#wave"/></svg>PK_3_Crash1_v2</td></tr>
            <tr><td><svg><use href="#wave"/></svg>PK_3_Crash1_v1</td></tr>
            <tr><td><svg><use href="#wave"/></svg>PK_2_Tom3_v3</td></tr>
            <tr><td><svg><use href="#wave"/></svg>PK_2_Tom3_v2</td></tr>
            <tr><td><svg><use href="#wave"/></svg>PK_2_Tom3_v1</td></tr>
            <tr><td><svg><use href="#wave"/></svg>PK_2_Tom2_v3</td></tr>
            <tr><td><svg><use href="#wave"/></svg>PK_2_Tom2_v2</td></tr>
            <tr><td><svg><use href="#wave"/></svg>PK_2_Tom2_v1</td></tr>
            <tr><td><svg><use href="#wave"/></svg>PK_2_Tom1_v3</td></tr>
            <tr><td><svg><use href="#wave"/></svg></td></tr>
          </tbody>
        </table>
        </div>
        <div class="rside"><b></b><div class="sc"><i></i></div></div>
        <div class="rh"><i></i></div>
      </div>
      <div class="preview">
        <svg viewBox="0 0 203 30"><path d="M18.500 0v16M36.500 0v16M55.500 0v16M74.500 0v16M111.500 0v16M129.500 0v16M148.500 0v16M167.500 0v16" stroke="#55585b"/><path d="M92.500 0v16M185.500 0v44" stroke="#bbb"/><path d="M.500 0v45" stroke="#fff"/><path d="M0 9.500h201M0 25.500h201" stroke="#dcdcdc"/><path d="M0 8l18 1v1L0 12zM0 24l18 1v1L0 28z" fill="#aaa"/><path d="M0 0h9L0 9z" fill="#fff"/></svg>
        <div class="secs"><span>0</span><span>5</span><span>10</span></div>
        <p>PK_3_Crash1_v2</p>
      </div>
      <div class="row pv">
        <div class="grp low"><button aria-label="再生"><svg><use href="#play"/></svg></button><button class="on" aria-label="停止"><svg><use href="#stopf"/></svg></button><button aria-label="ループ"><svg><use href="#loop"/></svg></button></div>
        <div class="grp low volume"><svg><use href="#ramp"/></svg><input type="range" aria-label="音量" value="76"></div>
        <div class="grp low"><button class="on" aria-label="自動再生"><svg><use href="#autop"/></svg></button><button aria-label="同期"><svg><use href="#sync"/></svg></button></div>
      </div>
      <div class="row pv last">
        <label class="sel w63 off"><select aria-label="キー"><option>-</option></select><em>-</em><svg class="caret"><use href="#caret"/></svg></label>
        <div class="grp low faint"><button>♪</button><button>1/2</button><button>2x</button><button class="lit" aria-label="テープ"><svg><use href="#tape"/></svg></button></div>
      </div>
    </div>
  </aside>
</main>

<footer class="transport">
  <div class="cluster">
    <div class="grp"><button class="b23" aria-label="オーディオ性能"><svg><use href="#clock"/></svg></button></div>
    <div class="grp slim"><button class="dark" aria-label="録音モード"><svg class="big"><use href="#dot"/></svg></button><button class="dark" aria-label="録音メニュー"><svg class="caret"><use href="#caret"/></svg></button></div><i class="grip"></i>
    <div class="grp slim"><button class="dark" aria-label="オーディオ録音"><svg class="wv"><use href="#wave"/></svg></button><button class="dark" aria-label="オーディオメニュー"><svg class="caret"><use href="#caret"/></svg></button></div><i class="grip"></i>
    <div class="grp"><button class="dark b22" aria-label="MIDI"><svg><use href="#din"/></svg></button><label class="sel w90 tight"><select aria-label="MIDI 録音モード"><option>新規パート</option></select><svg class="caret"><use href="#caret"/></svg></label><label class="sel w100 split"><select aria-label="サイクル録音モード"><option>ミックス</option></select><svg class="caret"><use href="#caret"/></svg></label></div><i class="grip"></i>
    <div class="grp"><button class="aq">AQ</button></div>
  </div>
  <div class="cluster mid">
    <div class="grp"><button aria-label="左ロケーター"><svg><use href="#flagl"/></svg></button><output class="w122">1.  1.  1.    0</output></div>
    <div class="grp loc2"><button aria-label="右ロケーター"><svg><use href="#flagr"/></svg></button><output class="w122">1.  1.  1.    0</output></div>
    <div class="grp"><button aria-label="パンチイン"><svg><use href="#pin1"/></svg></button><button aria-label="パンチアウト"><svg><use href="#pin2"/></svg></button></div>
    <div class="deck"><button class="b37" aria-label="先頭へ"><svg><use href="#tostart"/></svg></button><button class="b37" aria-label="末尾へ"><svg><use href="#toend"/></svg></button><button aria-label="サイクル"><svg><use href="#loop"/></svg></button><button class="cur" aria-label="停止"><svg><use href="#stop"/></svg></button><button aria-label="再生"><svg><use href="#playo"/></svg></button><button aria-label="録音"><svg><use href="#rec"/></svg></button></div><i class="grip"></i>
    <div class="grp"><button class="b37" aria-label="プリロール"><svg><use href="#perf"/></svg></button></div>
    <div class="grp"><button class="dark" aria-label="時間表示"><svg><use href="#note"/></svg></button><output class="w122 split">4.  4.  3.  46</output></div><i class="grip"></i>
    <div class="grp"><button class="on" aria-label="テンポトラック"><svg><use href="#tempo"/></svg></button><output class="w80 bpm">220.000<svg viewBox="0 0 10 18"><path d="M0 7l5-7 5 7zM0 11h10l-5 7z"/></svg></output><output class="w50 split sig">4/4</output><button class="b50">Tap</button><button class="dark" aria-label="テンポメニュー"><svg class="caret"><use href="#caret"/></svg></button></div><i class="grip"></i>
  </div>
  <div class="cluster">
    <div class="grp"><button aria-label="メトロノーム"><svg><use href="#metro"/></svg></button><button class="b18" aria-label="メトロノーム設定"><svg><use href="#gear"/></svg></button></div><i class="grip"></i>
    <div class="grp levels"><i></i><svg viewBox="0 0 60 23"><path d="M13 20h14M33 20h14" stroke="#52b6c9" stroke-width="2"/></svg></div><i class="grip"></i>
  </div>
</footer>
</body>
</html>
```
FILE: styles.css
```css
* { box-sizing: border-box; }
body {
  margin: 0; height: 100vh; min-height: 720px; display: flex; flex-direction: column;
  background: #090a0b; color: #c9cbcc;
  font: 12px/16px "Open Sans", "Noto Sans CJK JP", sans-serif;
  font-feature-settings: "palt";
}
h1, h2, dl, dd, ul, p { margin: 0; padding: 0; font-weight: normal; font-size: inherit; }
ul { list-style: none; }
a { color: inherit; text-decoration: none; }
i, em { font-style: normal; }
svg { fill: currentColor; display: block; flex: none; }
.defs { position: absolute; width: 0; height: 0; }
button, select, input { font: inherit; color: inherit; margin: 0; padding: 0; border: 0; background: none; border-radius: 0; font-feature-settings: inherit; }
button { display: flex; align-items: center; justify-content: center; flex: none; }
button svg { width: 24px; height: 23px; }
svg.caret, button svg.caret { width: 9px; height: 10px; }
svg.caret.sm, button svg.caret.sm { width: 8px; height: 7px; }

/* header */
.head { background: #25292c; height: 113px; flex: none; }
.titlebar { display: flex; align-items: center; height: 22px; background: #1d2124; padding: 1px 0 0 2px; color: #fff; }
.logo { width: 16px; height: 16px; }
.titlebar h1 { margin-left: 6px; font-size: 12px; flex: 1; }
.winbtns { display: flex; padding-right: 2px; }
.winbtns button { width: 45px; height: 21px; }
.winbtns svg { width: 11px; height: 11px; fill: none; stroke: #fff; }
.menu { display: grid; grid-template-columns: 56px 46px 74px 54px 47px 48px 56px 81px 59px 63px 76px 44px auto; justify-content: start; padding: 3px 11px; font-size: 12px; color: #a9acae; white-space: nowrap; }
.menu .kana { font-size: 11px; }
.toolbar { display: grid; grid-template-columns: 407px 1fr auto; padding: 6px 4px 0 8px; }
.cluster { display: flex; align-items: center; gap: 3px; }
.grp { display: flex; height: 26px; border: 1px solid #585b5e; border-radius: 3px; background: #3f4245; overflow: hidden; flex: none; }
.grp.low { height: 20px; }
.grp button { width: 25px; height: 100%; }
.grp.slim button { width: 21px; }
.grp.slim button svg { width: 20px; }
.grp.slim button svg.big { width: 26px; height: 26px; }
.grp.slim button svg.caret { width: 9px; }
.grp button.b18 { width: 18px; }
.grp button.b18 svg { width: 18px; }
.grp button.b22 { width: 22px; }
.grp button.b23 { width: 24px; }
.grp button.b37 { width: 37px; }
.grp button.b50 { width: 50px; }
.letters button, .q { font: bold 14px/20px "Liberation Sans", sans-serif; }
.yellow { background: #bfb63d; color: #1c1d12; }
.red { background: #d75438; color: #25100c; }
button.on { background: #d6d7d8; color: #222426; }
button.dark { background: #191b1e; }
.apart { margin-left: 6px; }
.far { margin-left: 17px; }
.sel { display: grid; align-items: center; background: #191b1e; color: #c3c5c7; font-size: 12px; }
.sel > * { grid-area: 1 / 1; }
.sel select { appearance: none; width: 100%; height: 100%; padding-left: 6px; outline: 0; }
.sel.tight select { padding-left: 1px; }
.sel svg.caret { justify-self: end; margin-right: 7px; pointer-events: none; }
.w63 { width: 63px; } .w75 { width: 76px; } .w90 { width: 90px; } .w100 { width: 100px; } .w113 { width: 113px; } .w125 { width: 125px; } .w137 { width: 137px; }
.status { display: flex; justify-content: center; gap: 6px; padding: 9px 0 0 12px; font-size: 11px; }
.status div { display: flex; justify-content: space-between; padding: 1px 9px; height: 19px; line-height: 17px; background: #33373a; white-space: nowrap; }
.status .kana { font-size: 10px; }
.status dd { font-weight: bold; }
.s160 { width: 159px; } .s168 { width: 169px; } .s125 { width: 125px; } .s176 { width: 176px; }

/* info line */
.info { flex: none; display: grid; grid-template-columns: 172px repeat(4, 98px) 100px 100px 98px 98px 100px 100px 98px 98px 140px; height: 41px; padding: 4px 0 2px; background: #16181b; border-bottom: 1px solid #050606; }
.info div { border-right: 1px solid #6a6d70; text-align: center; white-space: pre; overflow: hidden; }
.info dt { font-size: 10px; line-height: 15px; color: #96999c; }
.info dd { font: bold 11px/20px "Liberation Sans", "Noto Sans CJK JP", sans-serif; color: #eee; }
.info .left dd { text-align: left; padding-left: 8px; }
.info .num dd { text-align: right; padding-right: 4px; font-size: 13px; }
.info .vol dd { display: flex; justify-content: space-between; padding: 0 8px 0 10px; }
.info .vol span { color: #96999c; }
.overview { height: 28px; background: #25292c; flex: none; }

/* main frame */
.main { flex: 1; display: grid; grid-template: minmax(0, 1fr) / 1fr 230px; column-gap: 4px; padding: 5px 4px 0; min-height: 0; }
.leftcol { display: flex; flex-direction: column; gap: 4px; min-width: 0; min-height: 0; }
.panel { background: #25292c; border: 2px solid #5a5d60; border-radius: 8px; min-height: 0; overflow: hidden; }
.project { border-color: #f4f4f4; display: grid; grid-template: minmax(0, 1fr) / 518px 6px 1fr; padding: 4px; flex: 420 1 0; }
.editor { flex: 375 1 0; padding: 7px; display: flex; flex-direction: column; gap: 6px; }

/* track list */
.tracks { display: flex; flex-direction: column; min-height: 0; }
.trackbar { height: 25px; border-bottom: 1px solid #6a6d70; }
.trackbar .grp button { width: 24px; }
.trackbar .grp button svg { width: 18px; height: 18px; }
.tracklist { padding-left: 1px; }
.track { display: grid; grid-template-columns: 40px 3px 1fr 11px; height: 46px; border-bottom: 1px solid #050606; }
.track.io { height: 20px; }
.tid { display: flex; justify-content: space-between; padding: 5px 4px 0 4px; background: #76787b; color: #1d1f22; }
.tid b { font: 12px/15px "Liberation Sans", sans-serif; color: #2a2c2e; }
.track.io .tid { padding-top: 4px; }
svg.kind, button svg.kind { width: 15px; height: 14px; }
.strip { background: linear-gradient(90deg, transparent 40px, #c4cde2 40px, #c4cde2 43px, transparent 43px); }
.tbody { grid-column: 3; display: grid; grid-template-columns: 50px 1fr; column-gap: 9px; align-content: start; padding: 2px 0 0 2px; }
.tbody > span { grid-column: span 2; padding-left: 5px; line-height: 16px; }
.tbody h2 { font: 13px/18px "Liberation Sans", sans-serif; color: #d3d5d6; }
.meter { background: linear-gradient(90deg, #050606 5px, #17191b 5px, #17191b 6px, #050606 6px); }
.meter.live { background: linear-gradient(#5bb8c9, #5bb8c9) 2px 41px / 8px 2px no-repeat #050606; }
.ms { display: flex; border: 1px solid #0f1012; border-radius: 2px; height: 19px; }
.ms button { width: 24px; font: bold 13px/16px "Liberation Sans", sans-serif; }
.tbtns { grid-column: 2; display: flex; gap: 2px; margin-left: -3px; margin-top: 1px; }
.tbtns div { display: flex; border: 1px solid #0f1012; border-radius: 2px; height: 19px; }
.tbtns button { width: 23px; color: #c0c2c4; }
.tbtns button svg { width: 18px; height: 18px; }
.tbtns button svg.kind { width: 12px; height: 12px; }
.picked .tbody, .picked { background: #9b9d9e; }
.picked .tbody, .picked .tbody h2, .picked .tbtns button { color: #26282a; }
.picked .ms, .picked .tbtns div { border-color: #55575a; }
.picked .tbtns button.armed { background: #e03a3e; color: #300; }
.trackfoot { margin-top: auto; display: flex; align-items: center; padding: 0 4px 0 8px; color: #a3a6a8; height: 16px; }
.trackfoot span { flex: 1; }
.trackfoot svg.caret { width: 11px; height: 7px; margin-right: 7px; color: #85888a; }
.trackfoot .gear { width: 16px; height: 16px; color: #85888a; }
.divider { border-left: 2px solid #6f7174; margin-left: 1px; display: flex; align-items: center; }
.divider i { width: 2px; height: 24px; margin-left: -2px; background: repeating-linear-gradient(#fff 0, #fff 4px, #25292c 4px, #25292c 6px); }

/* arrangement */
.arrange { display: grid; grid-template: minmax(0, 1fr) 12px / 1fr 12px; margin-left: -2px; min-width: 0; min-height: 0; }
.canvas { position: relative; overflow: hidden; }
.grid { position: absolute; width: 100%; height: 100%; fill: none; }
.g0 { stroke: #35393c; } .g1 { stroke: #32363a; } .g2 { stroke: #45494c; } .g3 { stroke: #63666a; }
.t1 { stroke: #5a5d60; } .t2 { stroke: #b5b7b9; } .t3 { stroke: #fff; }
.bar { position: absolute; top: 8px; font-size: 13px; line-height: 17px; color: #f2f2f2; }
.clip { position: absolute; height: 41px; border: 1px solid #dcdcdc; background: #7a7a7c; color: #0b0b0c; font: bold 11px/17px "Liberation Sans", sans-serif; overflow: hidden; }
.clip span { float: left; padding: 0 3px; background: #8c8c8e; }
.clip svg { position: absolute; inset: 0; width: 100%; height: 100%; }
.notes { stroke: #535456; stroke-width: 2; }
.hair { stroke: #717173; }
.dia { fill: #58595b; }
.audio { background: #16172a; border-color: #77788a; color: #e3e3f2; }
.audio span { background: none; }
.audio small { position: absolute; left: 13px; bottom: 0; font: 10px/15px "Liberation Sans", "DejaVu Sans", sans-serif; color: #c2c2d4; }
.audio .hair { stroke: #1e2038; }
.zero { stroke: #9d9eb2; }
.body { fill: #a3a4ad; }
.cursor { position: absolute; top: 0; bottom: 0; width: 1px; background: #fff; }
.tip { position: absolute; left: 904px; top: 190px; height: 17px; padding: 0 3px; background: #fff; border: 1px solid #111; color: #111; font: bold 11px/15px "Liberation Sans", "Noto Sans CJK JP", sans-serif; white-space: pre; }

/* scroll and zoom strips */
.vbars { display: flex; flex-direction: column; gap: 3px; min-height: 0; }
.hbars { grid-column: 1; display: flex; gap: 3px; min-width: 0; }
.chip { width: 12px; height: 12px; background: #3b3e41; border-radius: 2px; color: #eee; }
.chip.tall { height: 22px; border: 1px solid #5a5d60; }
.chip svg.mini { width: 12px; height: 12px; }
.vscroll { flex: 1; background: #3f4144; display: flex; flex-direction: column; justify-content: space-between; align-items: center; color: #75787a; border-radius: 2px; padding: 3px 0; min-height: 0; }
.vscroll svg { width: 10px; height: 10px; }
.flip { transform: rotate(180deg); }
.vz { height: 82px; width: 12px; display: flex; flex-direction: column; align-items: center; background: #3b3e41; color: #fff; border-radius: 2px; padding: 2px 0; }
.vz.short { height: 48px; }
.vz button svg, .hz button svg { width: 12px; height: 12px; }
input[type=range] { appearance: none; background: none; flex: 1; min-width: 0; min-height: 0; height: 10px; }
input[type=range]::-webkit-slider-runnable-track { height: 2px; background: #6f7275; }
input[type=range]::-webkit-slider-thumb { appearance: none; width: 8px; height: 8px; margin-top: -3px; border-radius: 50%; background: #fff; }
input.vert { writing-mode: vertical-lr; direction: rtl; width: 8px; height: auto; }
input.vert::-webkit-slider-runnable-track { width: 2px; height: auto; }
input.vert::-webkit-slider-thumb { margin: 0 0 0 -3px; }
.hscroll { flex: 1; display: flex; align-items: center; background: #434548; height: 12px; color: #eee; padding: 0 3px; border-radius: 2px; }
.hscroll svg { width: 10px; height: 8px; }
.hscroll div { flex: 1; display: flex; margin: 0 5px; }
.hscroll i { height: 8px; border-radius: 2px; background: #eff0f1; }
.hz { width: 84px; height: 12px; display: flex; align-items: center; background: #3b3e41; border-radius: 2px; padding: 0 1px; color: #fff; }
.hz input { margin: 0 3px; }

/* sample editor */
.edbar { display: grid; grid-template-columns: 449px 1fr auto; }
.pointer { width: 8px; height: 10px; margin: 0 -1px 10px; color: #fff; }
.sample { flex: 1; display: grid; grid-template: 25px minmax(0, 1fr) 12px / 40px minmax(0, 1fr) 12px; min-height: 0; }
.db { background: #000; font-size: 11px; font-weight: bold; gap: 8px; justify-content: flex-end; }
.ruler { display: grid; grid-template-columns: repeat(34, 1fr) 15px; background: #1a1c1f; margin-right: 3px; overflow: hidden; }
.ruler b { border-left: 1px solid #f2f2f2; padding: 7px 0 0 4px; color: #f2f2f2; font-size: 13px; line-height: 18px; overflow: hidden; }
.ruler b:first-child { background: linear-gradient(135deg, #fff 6px, transparent 6px); }
.scale { background: #1a1c1f; font-size: 10px; line-height: 15px; display: flex; flex-direction: column; }
.scale div { flex: 1; display: flex; flex-direction: column; justify-content: space-between; text-align: right; padding: 1px 5px 0 0; }
.scale div + div { border-top: 1px solid #b5b7b9; }
.inf { font-size: 14px; }
.wavearea { position: relative; background: #121315; margin-right: 3px; }
.event { position: absolute; inset: 0 auto 0 0; width: 12px; background: #2b4767; border-left: 2px dotted #3f6b96; }
.edge { position: absolute; left: 11px; top: -25px; bottom: 0; width: 1px; background: #fff; }
.blip { position: absolute; width: 20px; height: 20px; fill: #55789c; }
.blip.top { top: calc(25% - 10px); }
.blip.low { top: calc(75% - 10px); }
.tag { position: absolute; background: #45638a; color: #e6ecf4; font-size: 11px; line-height: 15px; height: 15px; overflow: hidden; white-space: nowrap; }
.tag.start { left: 1px; top: 1px; padding: 0 2px; }
.tag.end { left: 0; top: 16px; width: 11px; }
.tag.snap { left: 1px; top: calc(50% - 8px); padding: 0 4px; }
.sample .hbars { grid-column: 2; }

/* lower tabs */
.lowtabs { display: flex; flex: none; margin-top: -4px; height: 24px; padding: 0 0 0 4px; font-weight: bold; color: #cfd1d2; white-space: nowrap; }
.lowtabs a { padding-top: 3px; }
.lowtabs .kana { font-size: 11px; }
.lowtabs .x svg { width: 14px; height: 14px; }
.lowtabs .x { width: 12px; height: 22px; }
.lowtabs .n1 { margin-left: 24px; width: 87px; }
.lowtabs .cur { margin-top: -2px; padding-top: 5px; height: 22px; width: 85px; text-align: center; background: #25292c; border: 2px solid #5a5d60; border-top: 0; border-radius: 0 0 4px 4px; color: #fff; line-height: 14px; }
.lowtabs .n2 { margin-left: 20px; width: 139px; }
.lowtabs .n3 { width: 92px; }

/* media zone */
.side { display: flex; flex-direction: column; padding-bottom: 4px; min-height: 0; }
.sidetabs { display: flex; flex: none; height: 22px; font-weight: bold; text-align: center; line-height: 23px; }
.sidetabs a { width: 69px; }
.sidetabs a.cur { width: 83px; height: 24px; position: relative; z-index: 1; background: #25292c; border: 2px solid #5a5d60; border-bottom: 0; border-radius: 4px 4px 0 0; color: #fff; line-height: 20px; font-size: 11px; }
.media { flex: 1; min-height: 0; background: #25292c; border: 2px solid #5a5d60; border-radius: 6px; padding: 7px 7px 11px; display: flex; flex-direction: column; }
.row { display: flex; flex: none; }
.searchrow, .filters { justify-content: space-between; }
.search { display: flex; align-items: center; width: 183px; height: 20px; border: 1px solid #585b5e; border-radius: 3px; background: #191b1e; padding-left: 3px; gap: 5px; }
.search svg { width: 12px; height: 13px; }
.search input { flex: 1; min-width: 0; outline: 0; }
.search input::placeholder { color: #8b8e90; font-style: italic; }
.sb { width: 25px; height: 20px; border: 1px solid #585b5e; border-radius: 3px; background: #3f4245; }
.sb svg { width: 18px; height: 16px; }
.sb.dim { color: #75787a; }
.crumbs { align-items: center; height: 31px; padding-top: 3px; border-bottom: 1px solid #6a6d70; font-size: 12px; color: #d6d8d9; }
.crumbs button { width: 20px; height: 20px; background: #33373a; border-radius: 3px; }
.crumbs button svg { width: 14px; height: 14px; }
.crumbs a svg { width: 14px; height: 14px; margin-left: 5px; }
.crumbs i { width: 12px; text-align: center; font-size: 13px; }
.dots3 { width: 18px; text-align: center; }
.here { padding-left: 5px; }
.filters { padding-top: 3px; height: 23px; }
.filters .sel, .cats .sel, .off { border: 1px solid #585b5e; border-radius: 3px; height: 20px; font-size: 11px; }
.filters .sel { font-size: 10px; width: 99px; }
.filters .sel select, .cats .sel select { padding-left: 4px; }
.filters .sel svg.caret { margin-right: 3px; }
.cats { display: grid; grid-template-columns: 64px 64px 65px; column-gap: 7px; padding: 8px 0 0 1px; flex: none; }
.cats .sel svg.caret { margin-right: 4px; }
.cats svg.caret { width: 8px; height: 9px; }
.cat { display: flex; justify-content: space-between; height: 87px; margin-top: 1px; overflow: hidden; font-size: 11px; color: #e6e7e8; }
.cat ul { overflow: hidden; flex: 1; padding-left: 2px; font-weight: bold; }
.cat li { height: 19px; line-height: 19px; white-space: nowrap; }
.sc { width: 6px; background: #55585b; border-radius: 3px; }
.sc i { display: block; height: 30px; background: #f2f2f2; border-radius: 3px; }
.results { margin-top: 7px; flex: 1; min-height: 0; display: grid; grid-template: minmax(0, 1fr) 6px / 1fr 8px; row-gap: 2px; }
.rwrap { overflow: hidden; }
.results table { width: 100%; border-collapse: separate; border-spacing: 0; }
.results th, .results td { text-align: left; padding: 0; height: 19px; line-height: 18px; white-space: nowrap; }
.results th { line-height: 16px; font-weight: normal; background: #434548; border-bottom: 3px solid #25292c; font-size: 11px; }
.results th svg { display: inline-block; width: 8px; height: 8px; margin: 0 6px 0 4px; color: #85888a; }
.results td { border-bottom: 1px solid #393c3f; font-weight: bold; font-size: 11px; color: #e9eaeb; }
.results td svg { display: inline-block; width: 16px; height: 14px; margin: 0 9px 0 1px; vertical-align: middle; }
.results .picked td { background: #c1c2c3; color: #0c0d0e; }
.rside { display: flex; flex-direction: column; align-items: flex-end; gap: 3px; }
.rside b { width: 8px; height: 16px; background: #434548; }
.rside .sc { flex: 1; }
.rside .sc i { margin-top: 261px; }
.rh { background: #55585b; border-radius: 3px; margin: 0 1px; }
.rh i { display: block; width: 78px; height: 6px; background: #f2f2f2; border-radius: 3px; }
.preview { flex: none; margin-top: 5px; height: 74px; border-radius: 6px; background: #16181b; padding: 5px 3px 0 5px; }
.preview svg { width: 203px; height: 30px; overflow: visible; }
.secs { display: grid; grid-template-columns: 93px 93px 1fr; padding-left: 5px; font-size: 10px; line-height: 15px; }
.preview p { text-align: right; padding: 2px 5px 0 0; font-size: 11px; }
.pv { justify-content: space-between; padding: 11px 4px 0 5px; gap: 1px; }
.pv .grp button { width: 24px; }
.pv .grp button svg { width: 18px; height: 18px; }
.volume { width: 69px; background: #191b1e; align-items: center; padding-right: 4px; }
.volume svg { width: 18px; height: 18px; color: #d6d7d8; }
.volume input::-webkit-slider-runnable-track { height: 5px; background: linear-gradient(90deg, #5aa9e6 72%, #3f4245 72%); }
.volume input::-webkit-slider-thumb { margin-top: -2px; width: 9px; height: 9px; background: #dfe0e1; }
.faint { color: #75787a; }
.faint .lit { color: #c9cbcc; }
.off select { padding-left: 10px; }
.off em { justify-self: center; color: #6a6d70; }
.off svg.caret { color: #6a6d70; margin-right: 4px; }

/* transport */
.transport { flex: none; height: 40px; background: #25292c; display: grid; grid-template-columns: 537px 1fr auto; padding: 0 2px 1px 4px; align-items: center; }
.cluster.mid { gap: 4px; }
.grip { width: 3px; height: 14px; margin: 0 1px; background: repeating-linear-gradient(#c9cbcc 0, #c9cbcc 3px, transparent 3px, transparent 5px); }
.mid .grip { margin: 0; }
.grp button svg.wv { width: 18px; height: 18px; }
.split { border-left: 1px solid #585b5e; }
.grp button.aq { width: 37px; font-size: 13px; }
.loc2 { margin: 0 1px 0 7px; }
output { background: #191b1e; white-space: pre; font: 15px/24px "Open Sans", sans-serif; text-align: right; padding-right: 5px; }
.w122 { width: 122px; } .w80 { width: 81px; } .w50 { width: 50px; }
output.sig, output.bpm { font-size: 12px; }
output.sig { text-align: center; padding: 0; }
output.bpm { display: flex; align-items: center; justify-content: space-between; padding: 0 6px 0 12px; }
.bpm svg { width: 9px; height: 15px; }
.deck { display: flex; height: 32px; border: 2px solid #c3c6c8; border-radius: 4px; background: #67696c; color: #dcddde; margin: 0 -3px 0 1px; }
.deck button { width: 50px; }
.deck .b37 { width: 37px; }
.deck .cur { background: #a3a8ab; color: #222426; }
.levels { width: 90px; background: #191b1e; }
.levels i { width: 26px; border-right: 1px solid #585b5e; }
.levels svg { width: 60px; height: 24px; }
```
